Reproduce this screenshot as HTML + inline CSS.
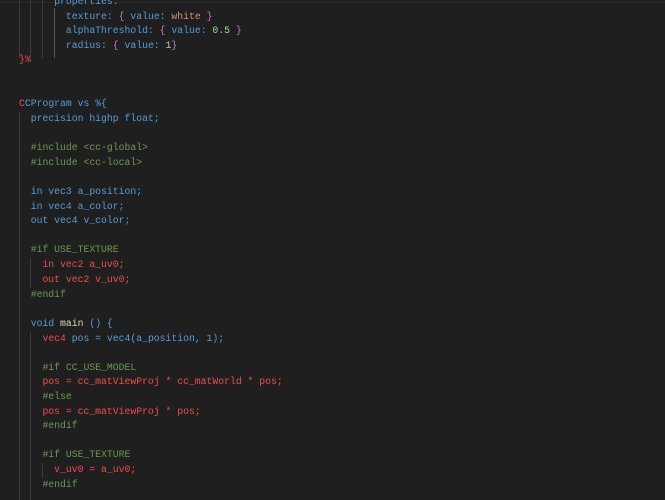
<!DOCTYPE html>
<html><head><meta charset="utf-8"><style>
html,body{margin:0;padding:0;width:665px;height:500px;overflow:hidden;background:#1f1f1f}
.l{position:absolute;left:19px;white-space:pre;font-family:"Liberation Mono",monospace;font-size:9.77px;line-height:14.6px;height:14.6px;color:#569cd6}
.g{position:absolute;width:1px;background:#3a3a3a}
.b{color:#569cd6}.r{color:#f14c4c}.gr{color:#6a9955}.m{color:#d16fd1}.o{color:#ce9178}.n{color:#b5cea8}.y{color:#dcdcaa}
</style></head><body>
<div style="position:absolute;left:0;top:2px;width:665px;height:1px;background:#2a2a2a"></div>
<div class="g" style="left:19px;top:0;height:58px"></div>
<div class="g" style="left:30px;top:0;height:58px"></div>
<div class="g" style="left:42px;top:0;height:58px"></div>
<div class="g" style="left:54px;top:8px;height:50px;background:#555"></div>
<div class="g" style="left:19px;top:112px;height:388px"></div>
<div class="g" style="left:30px;top:258px;height:30px"></div>
<div class="g" style="left:30px;top:332px;height:168px"></div>
<div class="g" style="left:42px;top:463px;height:15px"></div>

<div class="l" style="top:-5px">      properties:</div>
<div class="l" style="top:10px">        texture: <span class="m">{</span> value: <span class="o">white</span> <span class="m">}</span></div>
<div class="l" style="top:24px">        alphaThreshold: <span class="m">{</span> value: <span class="n">0.5</span> <span class="m">}</span></div>
<div class="l" style="top:39px">        radius: <span class="m">{</span> value: <span class="n">1</span><span class="m">}</span></div>
<div class="l r" style="top:53px;left:19px">}%</div>
<div class="l" style="top:97px"><span class="r">C</span>CProgram vs %{</div>
<div class="l" style="top:112px">  precision highp float;</div>
<div class="l gr" style="top:141px">  #include &lt;cc-global&gt;</div>
<div class="l gr" style="top:156px">  #include &lt;cc-local&gt;</div>
<div class="l" style="top:185px">  in vec3 a_position;</div>
<div class="l" style="top:200px">  in vec4 a_color;</div>
<div class="l" style="top:214px">  out vec4 v_color;</div>
<div class="l gr" style="top:243px">  #if USE_TEXTURE</div>
<div class="l r" style="top:258px">    in vec2 a_uv0;</div>
<div class="l r" style="top:273px">    out vec2 v_uv0;</div>
<div class="l gr" style="top:288px">  #endif</div>
<div class="l" style="top:317px">  void <span class="y">main</span> () {</div>
<div class="l" style="top:332px">    <span class="r">vec4</span> pos = vec4(a_position, 1);</div>
<div class="l gr" style="top:361px">    #if CC_USE_MODEL</div>
<div class="l r" style="top:375px">    pos = cc_matViewProj * cc_matWorld * pos;</div>
<div class="l gr" style="top:390px">    #else</div>
<div class="l r" style="top:405px">    pos = cc_matViewProj * pos;</div>
<div class="l gr" style="top:419px">    #endif</div>
<div class="l gr" style="top:448px">    #if USE_TEXTURE</div>
<div class="l r" style="top:463px">      v_uv0 = a_uv0;</div>
<div class="l gr" style="top:478px">    #endif</div>
</body></html>
